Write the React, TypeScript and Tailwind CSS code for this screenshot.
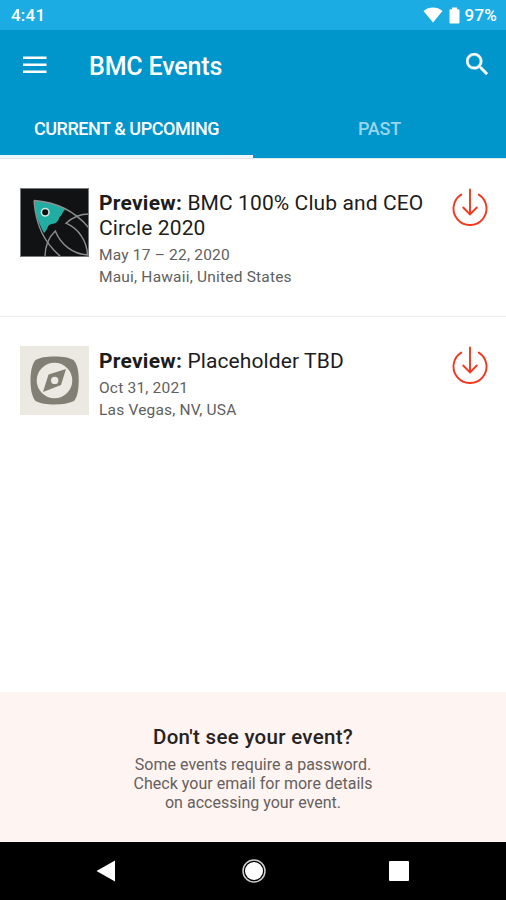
import type { ReactNode } from "react";

type EventItem = {
  name: string;
  date: string;
  place: string;
  thumb: ReactNode;
};

const RocketThumb = () => (
  <svg viewBox="0 0 69 69" className="h-[69px] w-[69px] shrink-0">
    <rect width="69" height="69" fill="#111213" />
    <path d="M14 12.500C25 13 37 16 46 21C42.500 23 42.500 27 39.500 29C38 34 36 35.500 31.500 36C27 37 28 41.500 24 45C18 34 14.500 24 14 12.500Z" fill="#22ada2" />
    <g fill="none" stroke="#8f8f8f" strokeWidth="1.400">
      <path d="M14 12.500C36 14 54 22 69 40" />
      <path d="M14 12.500C16 38 24 54 41 69" />
      <path d="M69 26C61 26 53 29 46 35.200C59 41 67 53 67.500 67C53 66 41 57 35.300 43C29 49 25 58 25 69" />
    </g>
    <circle cx="25.200" cy="24.300" r="3.800" fill="#111213" stroke="#d3e8e6" strokeWidth="1.500" />
    <rect x="0.500" y="0.500" width="68" height="68" fill="none" stroke="#77797a" />
  </svg>
);

const CompassThumb = () => (
  <svg viewBox="0 0 69 69" className="h-[69px] w-[69px] shrink-0">
    <rect width="69" height="69" fill="#ece9e2" />
    <path d="M34.500 10.500C43 10.500 49 11.500 53.500 14C57.500 18 58.700 26 58.700 34.500C58.700 43 57.500 51 54 55C49 57.500 42 58.500 34.500 58.500C27 58.500 20 57.500 15.500 55C12 51 10.500 43 10.500 34.500C10.500 26 12 18 15.500 14C20 11.500 26 10.500 34.500 10.500Z" fill="#827f75" />
    <circle cx="34.500" cy="34.500" r="17.800" fill="#ece9e2" />
    <path fillRule="evenodd" d="M46 23L41 39L23 46L28.500 28.500ZM34.700 30.700A3.700 3.700 0 1 0 34.700 38.100A3.700 3.700 0 1 0 34.700 30.700Z" fill="#827f75" />
  </svg>
);

const DownloadIcon = () => (
  <svg viewBox="0 0 38 38" className="h-[38px] w-[38px]" fill="none" stroke="#f2381f" strokeWidth="1.900" strokeLinecap="round">
    <path d="M10.200 6.600A16.500 16.500 0 1 0 27.800 6.600" />
    <path d="M19 1.500V26M12.200 19.500L19 26.300L25.800 19.500" />
  </svg>
);

const events: EventItem[] = [
  {
    name: "BMC 100% Club and CEO Circle 2020",
    date: "May 17 – 22, 2020",
    place: "Maui, Hawaii, United States",
    thumb: <RocketThumb />,
  },
  {
    name: "Placeholder TBD",
    date: "Oct 31, 2021",
    place: "Las Vegas, NV, USA",
    thumb: <CompassThumb />,
  },
];

const StatusBar = () => (
  <div className="flex h-[30px] items-center justify-between bg-[#1bace4] pt-[2px] pr-[9px] pl-[11px] text-[17px] font-medium tracking-[0.200px] text-white">
    <span>4:41</span>
    <div className="flex items-center">
      <svg viewBox="0 0 20 16" className="mr-[6px] mb-[3px] h-4 w-5" fill="currentColor">
        <path d="M0.500 4C6 -0.600 14 -0.600 19.500 4L10 15.500Z" />
      </svg>
      <svg viewBox="0 0 11 17" className="mr-[5px] mb-[2px] h-[17px] w-[11px]" fill="currentColor">
        <path d="M3 0.500H8V2.200H9.500Q10.500 2.200 10.500 3.200V15.500Q10.500 16.500 9.500 16.500H1.500Q0.500 16.500 0.500 15.500V3.200Q0.500 2.200 1.500 2.200H3Z" />
      </svg>
      <span>97%</span>
    </div>
  </div>
);

const Header = () => (
  <header className="h-[128px] bg-[#0095cb] text-white">
    <div className="flex h-[70px] items-center pr-[18px] pl-[23px]">
      <svg viewBox="0 0 24 18" className="h-[18px] w-6" fill="currentColor">
        <path d="M0 0.500H23.500V3H0ZM0 7.500H23.500V10H0ZM0 14.500H23.500V17H0Z" />
      </svg>
      <h1 className="ml-[42px] flex-1 pt-[3px] text-[25px] font-medium tracking-[-0.150px]">BMC Events</h1>
      <svg viewBox="3 3 17.490 17.490" className="mb-[3px] h-[22px] w-[22px]" fill="currentColor" stroke="currentColor" strokeWidth="0.300">
        <path d="M15.500 14h-.79l-.28-.27A6.471 6.471 0 0 0 16 9.500 6.500 6.500 0 1 0 9.500 16c1.610 0 3.090-.59 4.230-1.570l.27.28v.79l5 4.990L20.490 19l-4.990-5zm-6 0C7.010 14 5 11.990 5 9.500S7.010 5 9.500 5 14 7.010 14 9.500 11.990 14 9.500 14z" />
      </svg>
    </div>
    <nav className="grid h-[58px] grid-cols-2 text-center text-[18px] leading-[53px] font-medium tracking-[-0.450px]">
      <div className="border-b-[3px] border-[#eef7fb] pt-[2px]">CURRENT &amp; UPCOMING</div>
      <div className="pt-[2px] tracking-[-0.200px] text-[#99d5eb]">PAST</div>
    </nav>
  </header>
);

const EventRow = ({ event }: { event: EventItem }) => (
  <li className="flex h-[158px] border-b border-[#ececec] pt-[29px] pr-[17px] pl-5 last:border-b-0">
    {event.thumb}
    <div className="ml-[10px] flex-1 pt-[3px]">
      <h2 className="text-[21px] leading-[25px] tracking-[0.100px] text-[#1c1c1c]">
        <b className="font-bold tracking-[0.250px]">Preview:</b> {event.name}
      </h2>
      <div className="mt-[4px] text-[15.500px] leading-[21.500px] tracking-[0.200px] text-[#606060]">
        <p>{event.date}</p>
        <p>{event.place}</p>
      </div>
    </div>
    <DownloadIcon />
  </li>
);

const App = () => {
  return (
    <div className="flex h-[900px] w-[506px] flex-col overflow-hidden bg-white font-[Roboto,sans-serif]">
      <StatusBar />
      <Header />
      <ul className="flex-1 border-t border-[#dfe7ea]">
        {events.map((event) => (
          <EventRow key={event.name} event={event} />
        ))}
      </ul>
      <section className="h-[150px] bg-[#fef4f1] pt-[32px] text-center">
        <h3 className="text-[20.500px] leading-[26px] font-medium tracking-[0.300px] text-[#262322]">Don't see your event?</h3>
        <p className="mt-[5px] text-[16px] leading-[19px] tracking-[0.020px] text-[#66605e]">
          Some events require a password.
          <br />
          Check your email for more details
          <br />
          on accessing your event.
        </p>
      </section>
      <footer className="flex h-[58px] items-center justify-between bg-black pr-[97px] pl-[96px] text-white">
        <svg viewBox="0 0 19 22" className="h-[22px] w-[19px]" fill="currentColor">
          <path d="M19 0.500V21.500L0.500 11Z" />
        </svg>
        <svg viewBox="0 0 24 24" className="ml-[3px] h-6 w-6">
          <circle cx="12" cy="12" r="11" fill="none" stroke="#d0d0d0" strokeWidth="1.500" />
          <circle cx="12" cy="12" r="9" fill="currentColor" />
        </svg>
        <div className="h-5 w-5 rounded-[1px] bg-white" />
      </footer>
    </div>
  );
};

export default App;
